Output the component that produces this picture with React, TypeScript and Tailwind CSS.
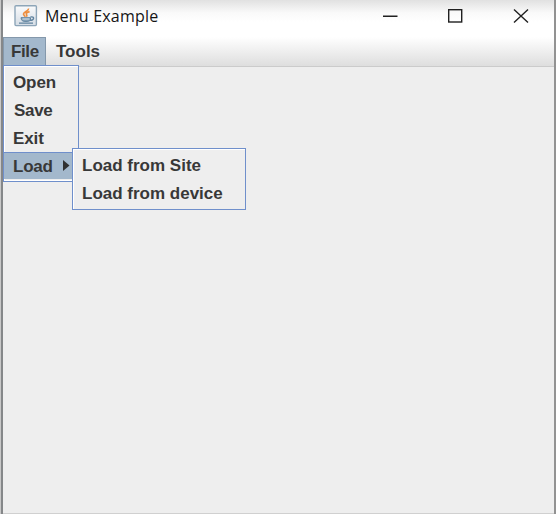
import type { ReactNode } from "react";

function JavaIcon() {
  return (
    <svg width="24" height="24" viewBox="0 0 24 24" className="shrink-0">
      <defs>
        <linearGradient id="tile" x1="0" y1="0" x2="0" y2="1">
          <stop offset="0" stopColor="#fafbfc" />
          <stop offset="1" stopColor="#d5dde5" />
        </linearGradient>
      </defs>
      <rect x="1" y="1.700" width="21.400" height="19.900" rx="1" fill="url(#tile)" stroke="#8da5b8" strokeWidth="1.400" />
      <path d="M14.500 4.500c.5 2.500-5 3.300-5 5.600 0 1 1.200 1.700 1.800 2.700M15.600 7.600c-2.600.8-4 1.700-3.100 2.900.6.800.4 1.500-.1 2.300" fill="none" stroke="#ee8e3e" strokeWidth="1.700" />
      <path d="M7 13.700h9.500v1.500c0 1.600-1.500 2.200-4.500 2.200s-4.200-.6-4.600-2z" fill="#8aa5ba" stroke="#60839f" strokeWidth="1" />
      <path d="M8.500 15h7" stroke="#dce5ec" strokeWidth="0.900" />
      <path d="M16.500 13c4.500-.8 4 3.200-.6 3.400M5 19.100h14" fill="none" stroke="#60839f" strokeWidth="1.300" />
    </svg>
  );
}

function Item({ children, className = "" }: { children: ReactNode; className?: string }) {
  return <div className={`flex h-[27.800px] items-center whitespace-nowrap pl-[9px] ${className}`}>{children}</div>;
}

export default function App() {
  return (
    <div className="flex h-[514px] w-[556px] overflow-hidden bg-[#eee] font-['Liberation_Sans',Arial,sans-serif] text-[17px] font-bold leading-7 text-[#383838]">
      <div className="w-[3px] shrink-0 border-l border-[#c8c8c8] bg-[#858789]" />
      <main className="relative flex min-w-0 flex-1 flex-col border-b border-[#d0d0d0]">
        <header className="flex h-[37px] shrink-0 bg-linear-to-b from-[#e1e1e1] via-[#fafafa] via-35% to-white to-60% pl-[11px] pt-[4px]">
          <JavaIcon />
          <h1 className="ml-[7px] mt-[-1px] whitespace-nowrap font-['Open_Sans','Noto_Sans',sans-serif] text-[16px] font-normal leading-[27px] tracking-[0.200px] text-[#151515]">Menu Example</h1>
          <svg className="ml-auto mr-[25px] mt-[4px]" width="146" height="16" viewBox="0 0 146 16" fill="none" stroke="#202020" strokeWidth="1.400">
            <path d="M0 8.200h14.500M131 1.500l14 13M145 1.500l-14 13" />
            <rect x="65.700" y="1.700" width="13" height="12.300" />
          </svg>
        </header>
        <nav className="flex h-[30px] shrink-0 border-b border-[#cbcbcb] bg-linear-to-b from-white to-[#dedede]">
          <div className="flex h-[29px] w-[43px] items-center border border-[#8498ab] bg-[#a3b8cc] pl-[7px] tracking-[-0.400px]">File</div>
          <div className="flex h-[29px] items-center pl-[10px] pt-px">Tools</div>
        </nav>
        <div className="flex-1 bg-[#eee]" />
        <div className="absolute left-0 top-[65px] h-[117px] w-[76px] border border-[#6f8fcb] bg-[#eee] pt-[3px] shadow-[inset_1px_1px_0_#fff,inset_0_-1px_0_#fff]">
          <Item className="tracking-[-0.100px]">Open</Item>
          <Item className="pl-[10px] tracking-[-0.300px]">Save</Item>
          <Item className="tracking-[-0.100px]">Exit</Item>
          <div className="flex h-[27px] items-center border-t border-[#6f8fcb] bg-[#a3b8cc] pl-[9px] pt-px tracking-[-0.250px]">
            Load
            <svg width="7" height="11" viewBox="0 0 7 11" className="ml-[10.500px] mt-[-3px]"><path d="M0 0 6.500 5.500 0 11Z" fill="#303030" /></svg>
          </div>
        </div>
        <div className="absolute left-[69px] top-[148px] h-[62px] w-[173.500px] border border-[#6f8fcb] bg-[#eee] pt-[3.500px] shadow-[inset_1px_1px_0_#fff]">
          <Item>Load from Site</Item>
          <Item>Load from device</Item>
        </div>
      </main>
      <div className="w-[2px] shrink-0 bg-[#929292]" />
    </div>
  );
}
